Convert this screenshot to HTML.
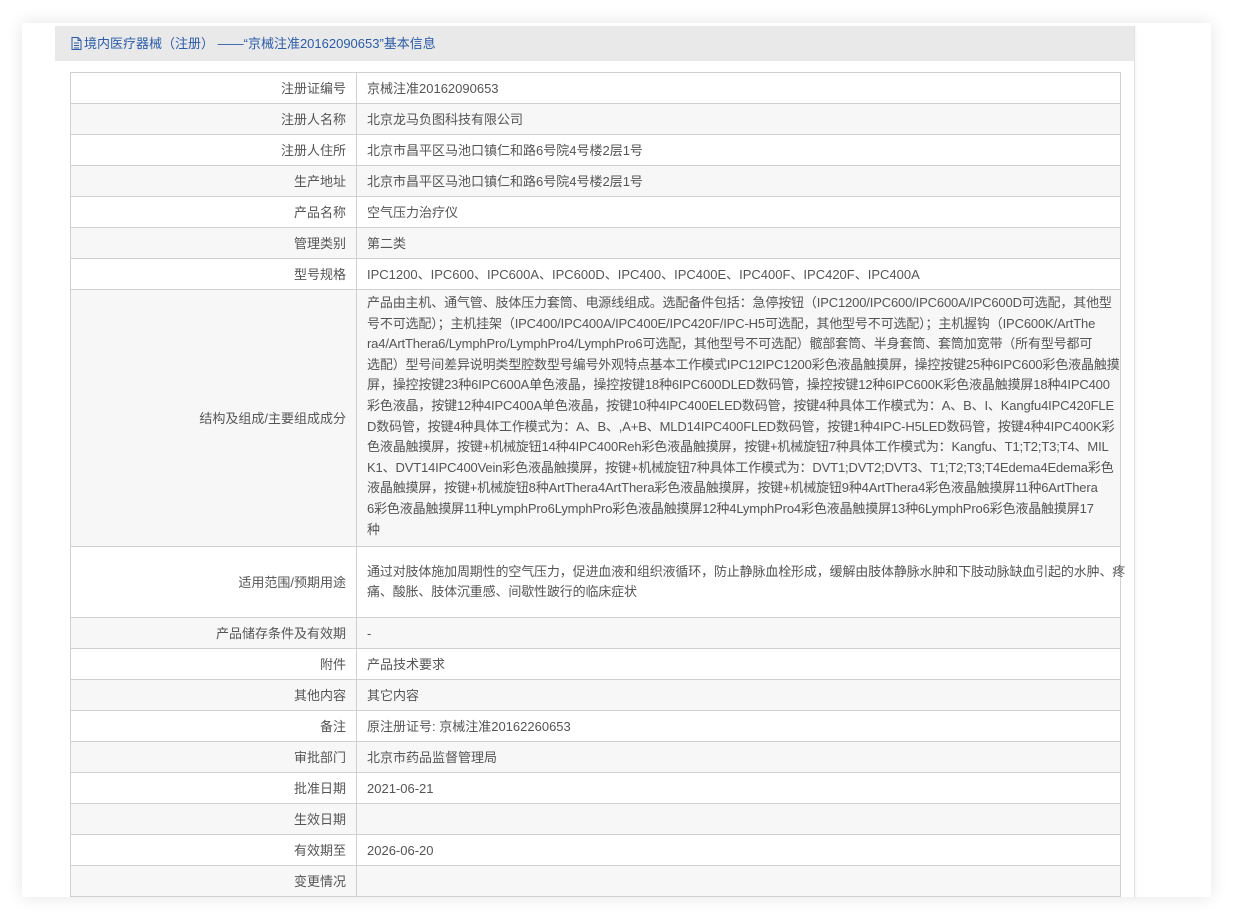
<!DOCTYPE html>
<html><head><meta charset="utf-8"><style>
body{margin:0;width:1234px;height:920px;background:#fff;font-family:"Liberation Sans","Noto Sans CJK SC",sans-serif;font-size:13px;color:#555;overflow:hidden;position:relative}
.card{position:absolute;left:22px;top:23px;width:1189px;height:874px;background:#fff;box-shadow:0 0 16px rgba(0,0,0,.11);overflow:hidden}
.panel{position:absolute;left:33px;top:3px;width:1079px;height:880px;background:#fff;border-right:1px solid #e2e2e2;box-shadow:1px 0 2px rgba(0,0,0,.05)}
.hd{height:35px;background:#e9e9e9;color:#2a5caa;font-size:13px;line-height:35px;padding-left:16px;white-space:nowrap}
.hd svg{vertical-align:-2px;margin-right:2px}
table{position:absolute;left:15px;top:46px;width:1051px;border-collapse:collapse;table-layout:fixed}
td{border:1px solid #d0d0d0;padding:0 10px;height:30px;line-height:19px;vertical-align:middle}
td.l{text-align:right}
tr.g td{background:#f7f7f7}
.long{padding-right:4px}
.long div{white-space:nowrap;letter-spacing:-0.15px}
td.big{vertical-align:top;padding-top:3px;padding-bottom:2px;line-height:20.6px}
td.mid{line-height:20px}
</style></head><body>
<div class="card"><div class="panel">
<div class="hd"><svg width="11" height="13" viewBox="0 0 11 13"><path d="M1 .5h6l3 3v9H1z M7 .5v3h3 M3 6h5 M3 8.5h5 M3 11h5" fill="none" stroke="#2a5caa" stroke-width="1"/></svg>境内医疗器械（注册） ——“京械注准20162090653”基本信息</div>
<table>
<colgroup><col style="width:286px"><col></colgroup>
<tr><td class="l">注册证编号</td><td>京械注准20162090653</td></tr>
<tr class="g"><td class="l">注册人名称</td><td>北京龙马负图科技有限公司</td></tr>
<tr><td class="l">注册人住所</td><td>北京市昌平区马池口镇仁和路6号院4号楼2层1号</td></tr>
<tr class="g"><td class="l">生产地址</td><td>北京市昌平区马池口镇仁和路6号院4号楼2层1号</td></tr>
<tr><td class="l">产品名称</td><td>空气压力治疗仪</td></tr>
<tr class="g"><td class="l">管理类别</td><td>第二类</td></tr>
<tr><td class="l">型号规格</td><td>IPC1200、IPC600、IPC600A、IPC600D、IPC400、IPC400E、IPC400F、IPC420F、IPC400A</td></tr>
<tr class="g"><td class="l">结构及组成/主要组成成分</td><td class="long big" style="height:251px">
<div>产品由主机、通气管、肢体压力套筒、电源线组成。选配备件包括：急停按钮（IPC1200/IPC600/IPC600A/IPC600D可选配，其他型</div>
<div>号不可选配）；主机挂架（IPC400/IPC400A/IPC400E/IPC420F/IPC-H5可选配，其他型号不可选配）；主机握钩（IPC600K/ArtThe</div>
<div>ra4/ArtThera6/LymphPro/LymphPro4/LymphPro6可选配，其他型号不可选配）髋部套筒、半身套筒、套筒加宽带（所有型号都可</div>
<div>选配）型号间差异说明类型腔数型号编号外观特点基本工作模式IPC12IPC1200彩色液晶触摸屏，操控按键25种6IPC600彩色液晶触摸</div>
<div>屏，操控按键23种6IPC600A单色液晶，操控按键18种6IPC600DLED数码管，操控按键12种6IPC600K彩色液晶触摸屏18种4IPC400</div>
<div>彩色液晶，按键12种4IPC400A单色液晶，按键10种4IPC400ELED数码管，按键4种具体工作模式为：A、B、I、Kangfu4IPC420FLE</div>
<div>D数码管，按键4种具体工作模式为：A、B、,A+B、MLD14IPC400FLED数码管，按键1种4IPC-H5LED数码管，按键4种4IPC400K彩</div>
<div>色液晶触摸屏，按键+机械旋钮14种4IPC400Reh彩色液晶触摸屏，按键+机械旋钮7种具体工作模式为：Kangfu、T1;T2;T3;T4、MIL</div>
<div>K1、DVT14IPC400Vein彩色液晶触摸屏，按键+机械旋钮7种具体工作模式为：DVT1;DVT2;DVT3、T1;T2;T3;T4Edema4Edema彩色</div>
<div>液晶触摸屏，按键+机械旋钮8种ArtThera4ArtThera彩色液晶触摸屏，按键+机械旋钮9种4ArtThera4彩色液晶触摸屏11种6ArtThera</div>
<div>6彩色液晶触摸屏11种LymphPro6LymphPro彩色液晶触摸屏12种4LymphPro4彩色液晶触摸屏13种6LymphPro6彩色液晶触摸屏17</div>
<div>种</div></td></tr>
<tr><td class="l">适用范围/预期用途</td><td class="long mid" style="height:70px"><div>通过对肢体施加周期性的空气压力，促进血液和组织液循环，防止静脉血栓形成，缓解由肢体静脉水肿和下肢动脉缺血引起的水肿、疼</div><div>痛、酸胀、肢体沉重感、间歇性跛行的临床症状</div></td></tr>
<tr class="g"><td class="l">产品储存条件及有效期</td><td>-</td></tr>
<tr><td class="l">附件</td><td>产品技术要求</td></tr>
<tr class="g"><td class="l">其他内容</td><td>其它内容</td></tr>
<tr><td class="l">备注</td><td>原注册证号: 京械注准20162260653</td></tr>
<tr class="g"><td class="l">审批部门</td><td>北京市药品监督管理局</td></tr>
<tr><td class="l">批准日期</td><td>2021-06-21</td></tr>
<tr class="g"><td class="l">生效日期</td><td></td></tr>
<tr><td class="l">有效期至</td><td>2026-06-20</td></tr>
<tr class="g"><td class="l">变更情况</td><td></td></tr>
<tr><td class="l">&nbsp;</td><td></td></tr>
</table>
</div></div>
</body></html>
